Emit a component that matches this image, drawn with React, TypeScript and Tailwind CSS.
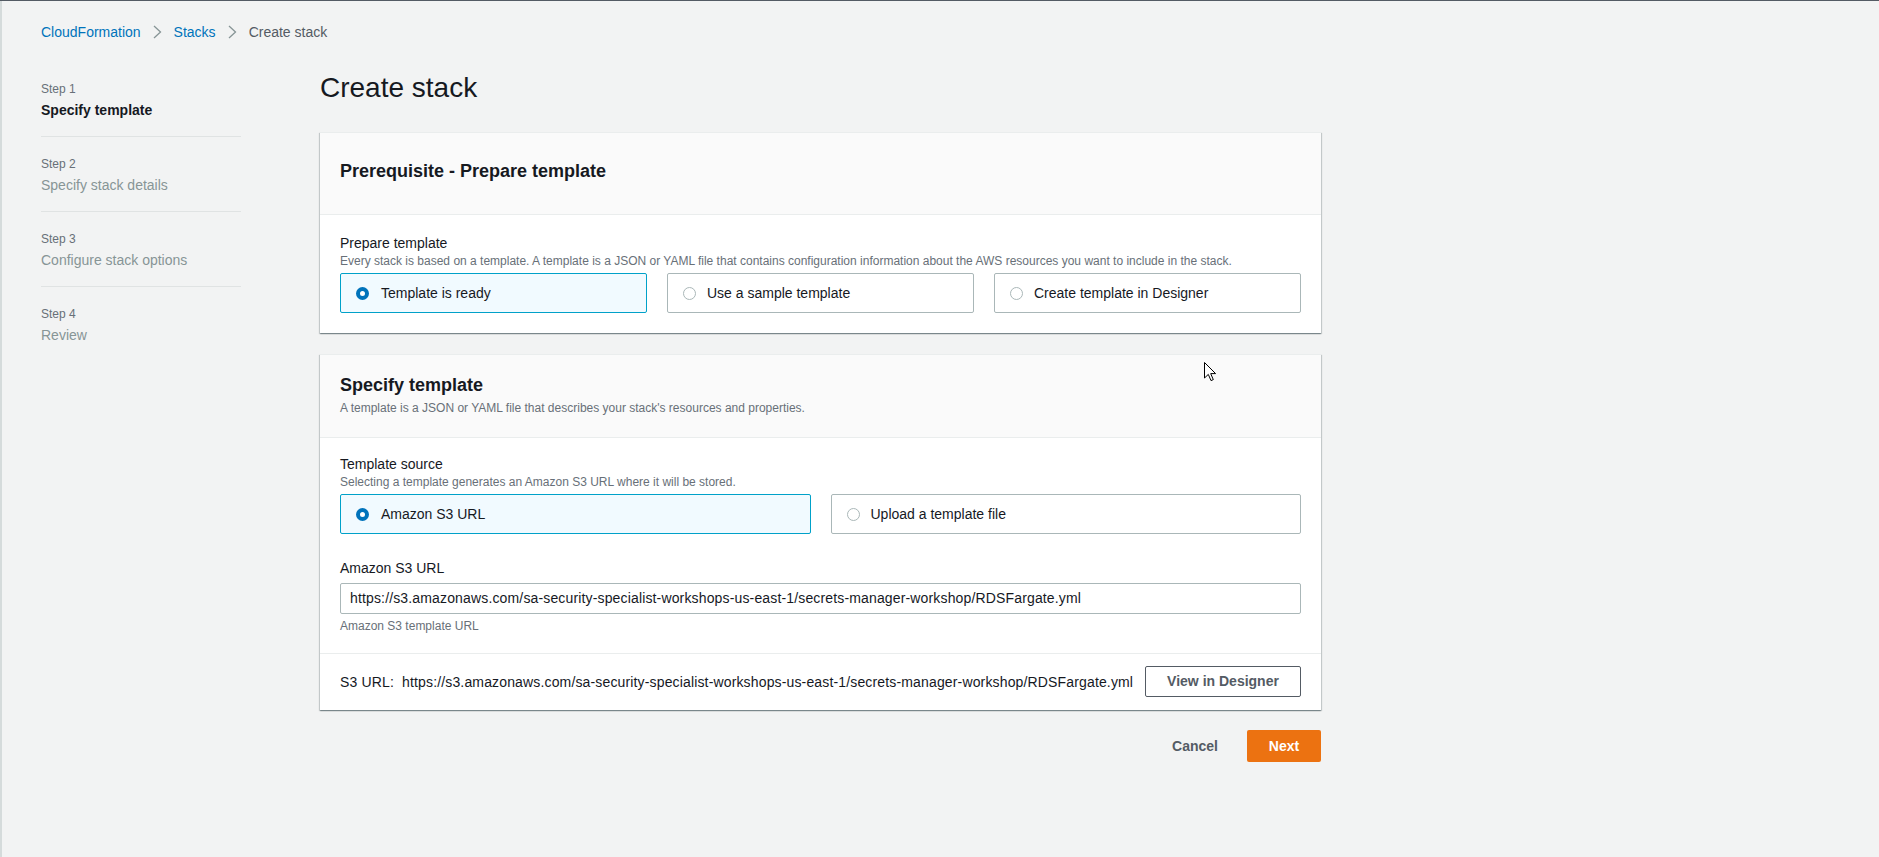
import React from 'react';

const steps = [
  { label: 'Step 1', title: 'Specify template', active: true },
  { label: 'Step 2', title: 'Specify stack details', active: false },
  { label: 'Step 3', title: 'Configure stack options', active: false },
  { label: 'Step 4', title: 'Review', active: false },
];

const s3Url =
  'https://s3.amazonaws.com/sa-security-specialist-workshops-us-east-1/secrets-manager-workshop/RDSFargate.yml';

function Chevron() {
  return (
    <svg width="9" height="14" viewBox="0 0 9 14" className="mx-[12px]">
      <polyline points="1,1 7.5,7 1,13" fill="none" stroke="#879596" strokeWidth="1.3" />
    </svg>
  );
}

function Radio({ checked }: { checked: boolean }) {
  return checked ? (
    <span className="block h-[13px] w-[13px] shrink-0 rounded-full border-[4px] border-[#0073bb] bg-white" />
  ) : (
    <span className="block h-[13px] w-[13px] shrink-0 rounded-full border border-[#aab7b8] bg-white" />
  );
}

function Tile({ label, checked }: { label: string; checked?: boolean }) {
  return (
    <div
      className={
        checked
          ? 'flex h-[40px] items-center gap-[12px] rounded-[2px] border border-[#00a1c9] bg-[#f1faff] pl-[15px]'
          : 'flex h-[40px] items-center gap-[11px] rounded-[2px] border border-[#aab7b8] bg-white pl-[15px]'
      }
    >
      <Radio checked={!!checked} />
      <span className="text-[14px] leading-[20px] text-[#16191f]">{label}</span>
    </div>
  );
}

function Panel({ children }: { children: React.ReactNode }) {
  return (
    <div className="border-t border-[#eaeded] bg-white shadow-[0_1px_1px_0_rgba(0,28,36,0.3),1px_1px_1px_0_rgba(0,28,36,0.15),-1px_1px_1px_0_rgba(0,28,36,0.15)]">
      {children}
    </div>
  );
}

export default function App() {
  return (
    <div
      className="relative min-h-screen border-t border-[#545b64] bg-[#f2f3f3] text-[#16191f]"
      style={{ fontFamily: '"Liberation Sans", Arial, sans-serif' }}
    >
      <div className="min-h-screen border-l-2 border-[#d5dbdb] pl-[39px] pt-[21px]">
        {/* breadcrumb */}
        <div className="flex h-[20px] items-center text-[14px] leading-[20px]">
          <span className="text-[#0073bb]">CloudFormation</span>
          <Chevron />
          <span className="text-[#0073bb]">Stacks</span>
          <Chevron />
          <span className="text-[#545b64]">Create stack</span>
        </div>

        <div className="flex">
          {/* steps nav */}
          <nav className="w-[200px] pt-[39px]">
            {steps.map((s, i) => (
              <div
                key={s.label}
                className={
                  i < steps.length - 1
                    ? 'border-b border-[#e0e3e3] pb-[16px] mb-[19px]'
                    : ''
                }
              >
                <div className="text-[12px] leading-[16px] text-[#687078]">{s.label}</div>
                <div
                  className={
                    s.active
                      ? 'mt-[3px] text-[14px] font-bold leading-[20px] text-[#16191f]'
                      : 'mt-[3px] text-[14px] leading-[20px] text-[#879596]'
                  }
                >
                  {s.title}
                </div>
              </div>
            ))}
          </nav>

          {/* main */}
          <main className="ml-[79px] w-[1001px] pt-[28px]">
            <h1 className="text-[28px] font-normal leading-[36px] text-[#16191f]">Create stack</h1>

            <div className="mt-[26px]">
              <Panel>
                <div className="border-b border-[#eaeded] bg-[#fafafa] px-[20px] pb-[32px] pt-[27px]">
                  <h2 className="text-[18px] font-bold leading-[22px]">Prerequisite - Prepare template</h2>
                </div>
                <div className="px-[20px] pb-[20px] pt-[18px]">
                  <div className="text-[14px] leading-[20px]">Prepare template</div>
                  <div className="text-[12px] leading-[16px] text-[#687078]">
                    Every stack is based on a template. A template is a JSON or YAML file that contains configuration
                    information about the AWS resources you want to include in the stack.
                  </div>
                  <div className="mt-[4px] grid grid-cols-3 gap-[20px]">
                    <Tile label="Template is ready" checked />
                    <Tile label="Use a sample template" />
                    <Tile label="Create template in Designer" />
                  </div>
                </div>
              </Panel>
            </div>

            <div className="mt-[21px]">
              <Panel>
                <div className="border-b border-[#eaeded] bg-[#fafafa] px-[20px] pb-[21px] pt-[19px]">
                  <h2 className="text-[18px] font-bold leading-[22px]">Specify template</h2>
                  <div className="mt-[4px] text-[12px] leading-[16px] text-[#687078]">
                    A template is a JSON or YAML file that describes your stack's resources and properties.
                  </div>
                </div>
                <div className="border-b border-[#eaeded] px-[20px] pb-[19px] pt-[16px]">
                  <div className="text-[14px] leading-[20px]">Template source</div>
                  <div className="text-[12px] leading-[16px] text-[#687078]">
                    Selecting a template generates an Amazon S3 URL where it will be stored.
                  </div>
                  <div className="mt-[4px] grid grid-cols-2 gap-[20px]">
                    <Tile label="Amazon S3 URL" checked />
                    <Tile label="Upload a template file" />
                  </div>

                  <div className="mt-[24px] text-[14px] leading-[20px]">Amazon S3 URL</div>
                  <div className="mt-[5px] flex h-[31px] items-center rounded-[2px] border border-[#aab7b8] bg-white pl-[9px] text-[14px] tracking-[0.15px] text-[#16191f]">
                    {s3Url}
                  </div>
                  <div className="mt-[4px] text-[12px] leading-[16px] text-[#687078]">Amazon S3 template URL</div>
                </div>
                <div className="flex items-center justify-between px-[20px] pb-[13px] pt-[12px]">
                  <div className="text-[14px] leading-[20px] tracking-[0.15px] text-[#16191f]">
                    S3 URL:&nbsp;&nbsp;{s3Url}
                  </div>
                  <button className="h-[31px] w-[156px] rounded-[2px] border border-[#545b64] bg-white text-[14px] font-bold text-[#545b64]">
                    View in Designer
                  </button>
                </div>
              </Panel>
            </div>

            <div className="mt-[20px] flex items-center justify-end">
              <button className="mr-[9px] h-[32px] px-[20px] text-[14px] font-bold text-[#545b64]">Cancel</button>
              <button className="h-[32px] w-[74px] rounded-[2px] bg-[#ec7211] text-[14px] font-bold text-white">
                Next
              </button>
            </div>
          </main>
        </div>
      </div>

      {/* mouse pointer */}
      <svg
        className="absolute left-[1204px] top-[361px]"
        width="13"
        height="21"
        viewBox="0 0 13 21"
      >
        <path
          d="M0.5,0.5 L0.5,16 L4.3,12.4 L7,18.6 L9.3,17.6 L6.7,11.6 L11.6,11.6 Z"
          fill="#fff"
          stroke="#000"
          strokeWidth="1"
          strokeLinejoin="round"
        />
      </svg>
    </div>
  );
}
